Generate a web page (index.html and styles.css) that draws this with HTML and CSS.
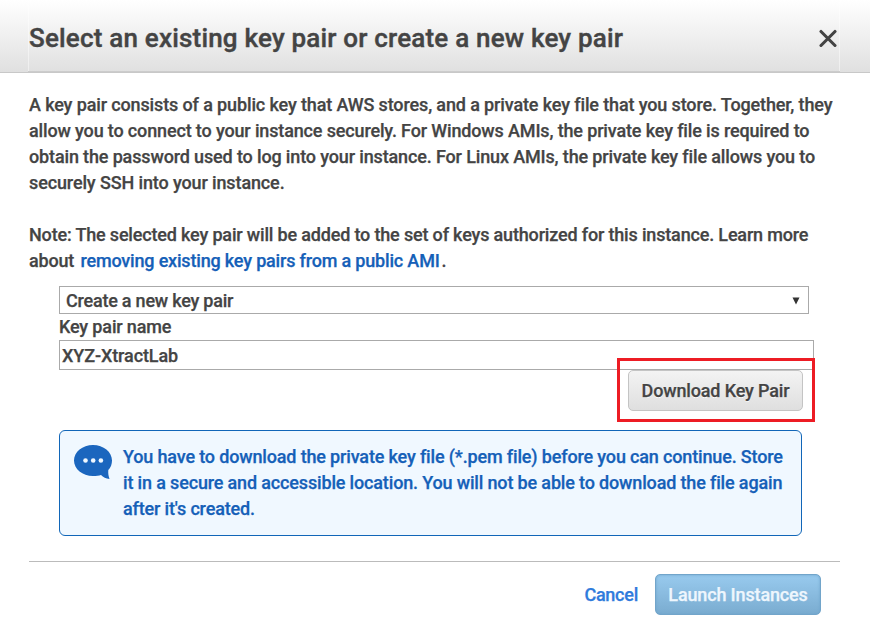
FILE: index.html
```html
<!DOCTYPE html>
<html lang="en">
<head>
<meta charset="utf-8">
<title>Key pair</title>
<link rel="stylesheet" href="styles.css">
</head>
<body>
<header class="header">
  <div class="header-inner">
    <h1>Select an existing key pair or create a new key pair</h1>
    <svg class="close" width="18" height="18" viewBox="0 0 18 18"><path d="M2 2.500L16 16.500M16 2.500L2 16.500" stroke="#444" stroke-width="3.100" stroke-linecap="round"/></svg>
  </div>
</header>
<main class="content">
  <p class="intro"><span class="l1">A key pair consists of a public key that AWS stores, and a private key file that you store. Together, they</span><br><span class="l2">allow you to connect to your instance securely. For Windows AMIs, the private key file is required to</span><br><span class="l3">obtain the password used to log into your instance. For Linux AMIs, the private key file allows you to</span><br><span class="l4">securely SSH into your instance.</span></p>
  <p class="note"><span class="l5">Note: The selected key pair will be added to the set of keys authorized for this instance. Learn more</span><br><span class="l6">about <a>removing existing key pairs from a public AMI</a>.</span></p>
  <div class="form">
    <div class="select"><span>Create a new key pair</span><svg width="8" height="8" viewBox="0 0 8 8"><path d="M.5 .5H7.500L4 7.500Z" fill="#333"/></svg></div>
    <div class="label">Key pair name</div>
    <div class="input">XYZ-XtractLab</div>
    <div class="highlight"><div class="download">Download Key Pair</div></div>
    <div class="info">
      <svg class="bubble" width="38" height="34" viewBox="0 0 38 34"><path d="M19 0C8.500 0 0 7 0 15.500S8.500 31 19 31c3.300 0 6-.3 8-1 2.200 2.300 5 3.500 8.500 4C34.500 31 34 28.500 34.300 25 36.800 22.500 38 19 38 15.500 38 7 29.500 0 19 0Z" fill="#1b66be"/><g fill="#f0f8ff"><circle cx="11.500" cy="15.500" r="2.300"/><circle cx="19.200" cy="15.500" r="2.300"/><circle cx="26.900" cy="15.500" r="2.300"/></g></svg>
      <p>You have to download the private key file (*.pem file) before you can continue. Store<br>it in a secure and accessible location. You will not be able to download the file again<br>after it's created.</p>
    </div>
  </div>
</main>
<footer class="footer"><a class="cancel">Cancel</a><div class="launch">Launch Instances</div></footer>
</body>
</html>
```
FILE: styles.css
```css
* { box-sizing: border-box; }
body { margin: 0; width: 870px; height: 638px; background: #fff; font: 500 18px/26px Roboto, sans-serif; letter-spacing: -0.15px; -webkit-text-stroke: 0.25px; color: #444; overflow: hidden; white-space: nowrap; }
p, h1 { margin: 0; }
svg { flex: none; }
.header { height: 73px; padding: 0 30px 0 28px; background: linear-gradient(#fff, #e0e0e0); border-bottom: 1px solid #c8c8c8; }
.header-inner { display: flex; justify-content: space-between; align-items: center; height: 72px; padding: 5px 3px 0 1px; border-bottom: 1px solid #ccc; background: linear-gradient(#fff, #eee) left / 1px 100% no-repeat, linear-gradient(#fff, #eee) right / 1px 100% no-repeat; }
h1 { font-size: 26px; font-weight: 500; letter-spacing: 0.19px; -webkit-text-stroke: 0.4px; }
.content { padding: 19px 29px 0; }
.l1 { letter-spacing: -0.132px; }
.l2 { letter-spacing: -0.147px; }
.l3 { letter-spacing: -0.143px; }
.l4 { letter-spacing: -0.125px; }
.l5 { letter-spacing: -0.17px; }
.l6 { letter-spacing: -0.18px; }
.note { margin-top: 26px; }
a { color: #1560b8; }
.note a { margin-left: 2px; margin-right: 2px; }
.form { margin-left: 30px; padding-top: 12px; }
.select { width: 750px; height: 28px; border: 1px solid #aaa; padding: 1px 8px 0 6px; display: flex; align-items: center; justify-content: space-between; letter-spacing: -0.22px; }
.label { height: 26px; }
.input { width: 755px; height: 30px; border: 1px solid #aaa; line-height: 30px; padding-left: 2px; letter-spacing: -0.1px; }
.highlight { position: relative; width: 198px; height: 64px; margin: -12px 0 0 558px; border: 3px solid #ed1c24; padding: 9px 9px 0 8px; }
.download { height: 41px; border: 1px solid #c4c4c4; border-radius: 5px; background: linear-gradient(#f3f3f3, #dfdfdf); text-align: center; line-height: 39px; text-shadow: 0 1px #fff; }
.info { width: 743px; height: 106px; margin-top: 8px; border: 1px solid #1166b8; border-radius: 6px; background: #f0f8ff; color: #1560b8; display: flex; padding: 13px 14px; gap: 11px; letter-spacing: -0.158px; }
.bubble { margin-top: 1px; }
.footer { margin: 25px 30px 0 29px; border-top: 1px solid #bbb; padding: 12px 19px 0 0; display: flex; justify-content: flex-end; gap: 17px; line-height: 40px; }
.cancel { color: #2f7bdc; padding-top: 1px; letter-spacing: -0.25px; }
.launch { width: 166px; height: 41px; border: 1px solid #72a5ca; border-radius: 5px; background: linear-gradient(#98caee, #7aacd0); box-shadow: inset 0 0 3px #6ea4cc; color: #eef6fd; letter-spacing: -0.15px; text-align: center; }
```
